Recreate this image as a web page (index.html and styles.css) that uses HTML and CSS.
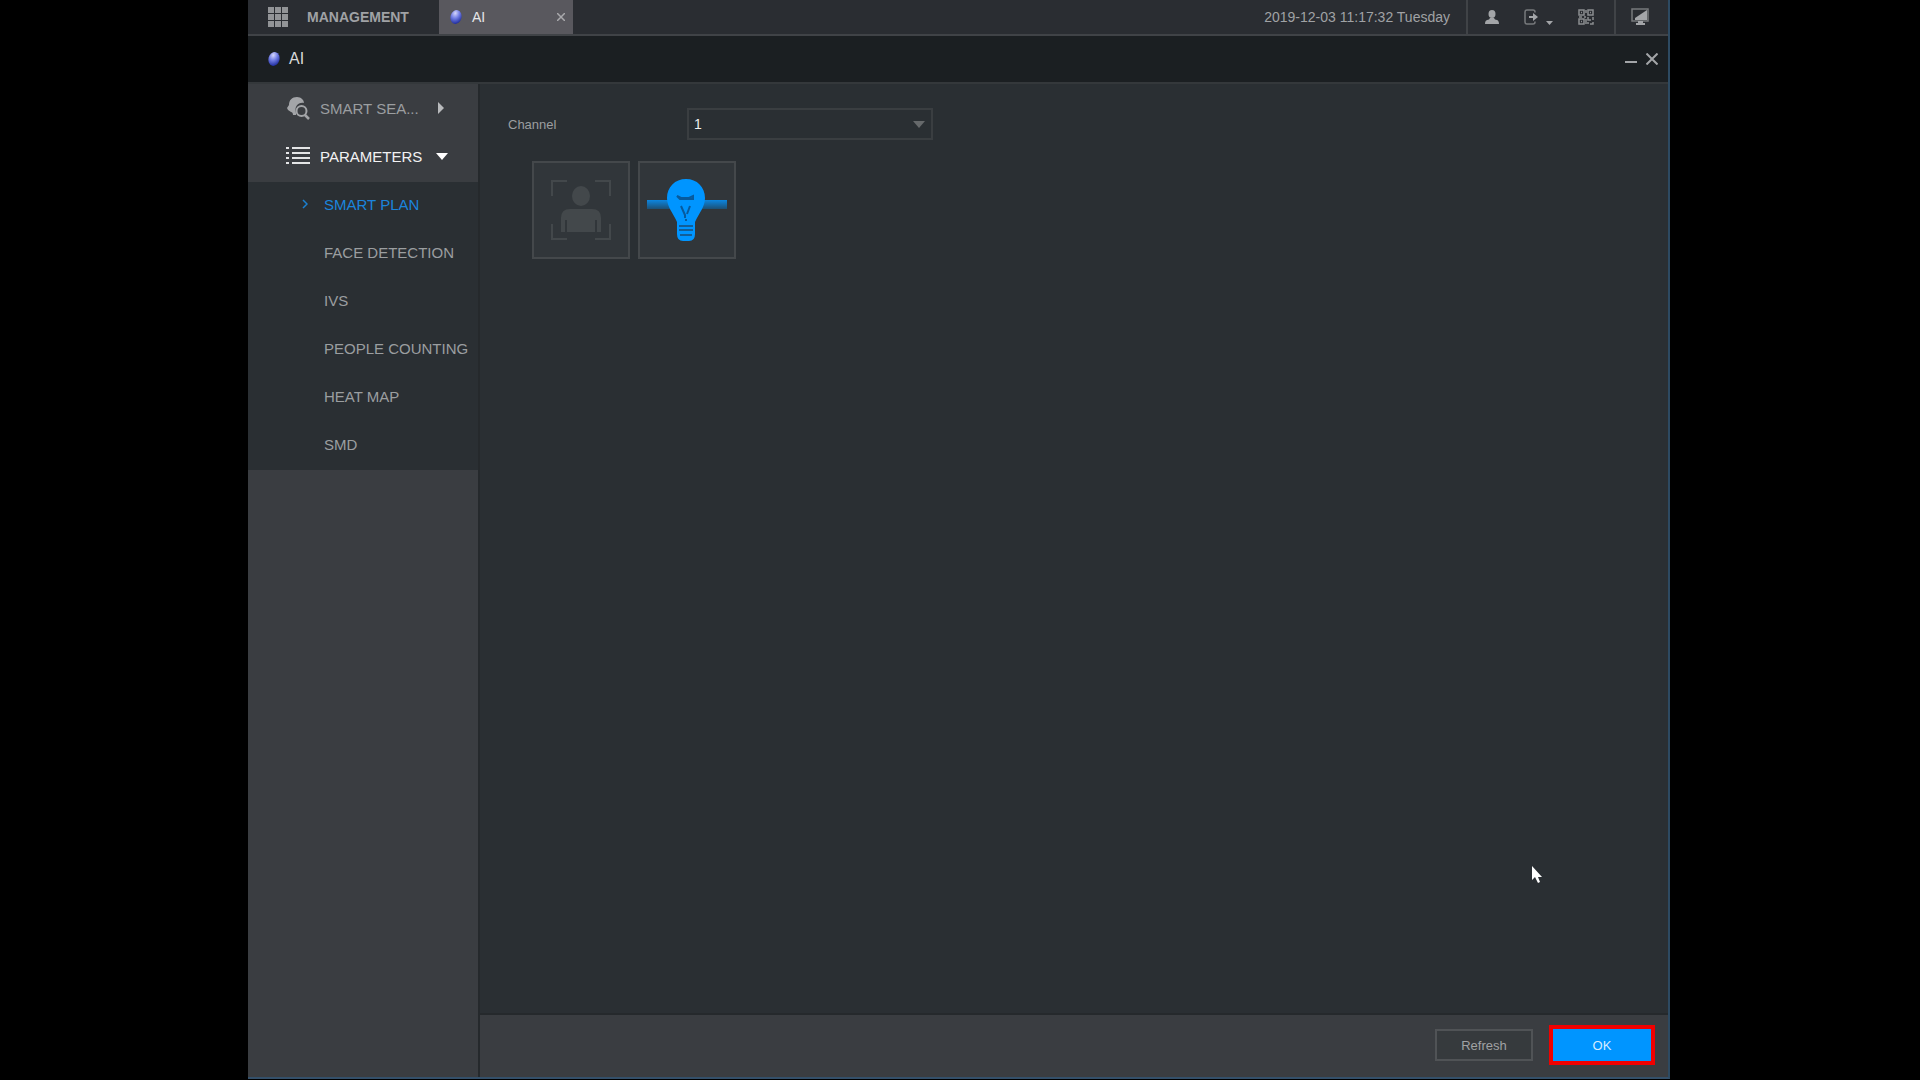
FILE: index.html
```html
<!DOCTYPE html>
<html lang="en">
<head>
    <meta charset="UTF-8">
    <meta name="viewport" content="width=device-width, initial-scale=1.0">
    <title>AI</title>
    <link rel="stylesheet" href="styles.css">
</head>
<body>
    <div class="app">
        <header class="topbar">
            <a href="#" class="management">
                <svg width="20" height="20" viewBox="0 0 20 20" fill="#929497">
                    <path d="M0 0h6v6H0zM7 0h6v6H7zM14 0h6v6h-6zM0 7h6v6H0zM7 7h6v6H7zM14 7h6v6h-6zM0 14h6v6H0zM7 14h6v6H7zM14 14h6v6h-6z"/>
                </svg>
                <span>MANAGEMENT</span>
            </a>
            <div class="tab">
                <svg width="12" height="14" viewBox="0 0 12 14">
                    <defs>
                        <radialGradient id="orb" cx="35%" cy="25%" r="80%">
                            <stop offset="0" stop-color="#d5d6fa"/>
                            <stop offset="0.45" stop-color="#7580e6"/>
                            <stop offset="1" stop-color="#1c2a9c"/>
                        </radialGradient>
                    </defs>
                    <ellipse cx="6" cy="7" rx="5.5" ry="7" transform="rotate(15 6 7)" fill="url(#orb)"/>
                </svg>
                <span class="tab-name">AI</span>
                <button type="button" class="icon-btn" aria-label="Close tab">
                    <svg width="8" height="8" viewBox="0 0 8 8" stroke="#a9a9ac" stroke-width="1.5"><path d="M0 0l8 8M8 0L0 8"/></svg>
                </button>
            </div>
            <time class="clock">2019-12-03 11:17:32 Tuesday</time>
            <div class="tools">
                <button type="button" class="icon-btn" aria-label="User">
                    <svg width="14" height="14" viewBox="0 0 14 14" fill="#a3a5a8"><ellipse cx="7" cy="4" rx="3.5" ry="4"/><path d="M0 14c0-3 1-4 4-4.5l1-1.5h4l1 1.5c3 .5 4 1.500 4 4.500z"/></svg>
                </button>
                <button type="button" class="icon-btn" aria-label="Log out">
                    <svg width="29" height="16" viewBox="0 0 29 16"><path d="M11 3.500V3q0-2-2-2H3Q1 1 1 3v10q0 2 2 2h6q2 0 2-2v-.5" fill="none" stroke="#77797c" stroke-width="1.500"/><path d="M5 7h4V4l5 4-5 4V9H5zM22 12h7l-3.500 4z" fill="#a3a5a8"/></svg>
                </button>
                <button type="button" class="icon-btn" aria-label="QR code">
                    <svg width="16" height="16" viewBox="0 0 16 16" fill="none" stroke="#8b8d90" stroke-width="1.500"><path d="M1 1h5v5H1zM10 1h5v5h-5zM1 10h5v5H1zM3 3.500h1M12 3.500h1M3 12.500h1M10 8v3h3M15 8v3M10 15v-2M12 15h3v-2M1 8h3M6 8h2M8 1v3M8 10v5"/></svg>
                </button>
            </div>
            <div class="display">
                <button type="button" class="icon-btn" aria-label="Display">
                    <svg width="18" height="18" viewBox="0 0 18 18"><path d="M1 1h16v12H1z" fill="none" stroke="#77797c" stroke-width="1.500"/><path d="M4 12V10L16 2v10zM7 13h5v2h2v2H5v-2h2z" fill="#a3a5a8"/></svg>
                </button>
            </div>
        </header>

        <div class="titlebar">
            <svg width="12" height="14" viewBox="0 0 12 14"><ellipse cx="6" cy="7" rx="5.5" ry="7" transform="rotate(15 6 7)" fill="url(#orb)"/></svg>
            <h1>AI</h1>
            <button type="button" class="icon-btn" aria-label="Minimize">
                <svg width="12" height="12" viewBox="0 0 12 12" stroke="#a3a5a8" stroke-width="2"><path d="M0 9h12"/></svg>
            </button>
            <button type="button" class="icon-btn" aria-label="Close">
                <svg width="12" height="12" viewBox="0 0 12 12" stroke="#a3a5a8" stroke-width="2"><path d="M0.500 0.500l11 11M11.500 0.500l-11 11"/></svg>
            </button>
        </div>

        <div class="content">
            <nav class="sidebar">
                <a href="#" class="group">
                    <svg width="24" height="24" viewBox="0 0 24 24"><path d="M3 9c0-5 3-8 8-8 4 0 7 3 7 6-6-1-10 4-8 10v2H7c0-2-1-3-2-3l-3-2-1-2z" fill="#a3a5a8"/><circle cx="15.500" cy="15" r="5" fill="none" stroke="#a3a5a8" stroke-width="2"/><path d="M19 19l4 4" stroke="#a3a5a8" stroke-width="2.500"/></svg>
                    <span class="group-name">SMART SEA...</span>
                    <svg width="12" height="12" viewBox="0 0 12 12" fill="#b8babc"><path d="M2 0l6 6-6 6z"/></svg>
                </a>
                <a href="#" class="group open">
                    <svg width="24" height="18" viewBox="0 0 24 18" fill="#e4e5e6"><path d="M0 0h3v2H0zM6 0h18v2H6zM0 5h3v2H0zM6 5h18v2H6zM0 10h3v2H0zM6 10h18v2H6zM0 15h3v2H0zM6 15h18v2H6z"/></svg>
                    <span class="group-name">PARAMETERS</span>
                    <svg width="12" height="7" viewBox="0 0 12 7" fill="#fff"><path d="M0 0h12l-6 7z"/></svg>
                </a>
                <ul class="submenu">
                    <li>
                        <a href="#" class="active">
                            <svg width="6" height="10" viewBox="0 0 6 10" fill="none" stroke="#1b80d0" stroke-width="1.500"><path d="M1 1l4 4-4 4"/></svg>
                            SMART PLAN
                        </a>
                    </li>
                    <li><a href="#">FACE DETECTION</a></li>
                    <li><a href="#">IVS</a></li>
                    <li><a href="#">PEOPLE COUNTING</a></li>
                    <li><a href="#">HEAT MAP</a></li>
                    <li><a href="#">SMD</a></li>
                </ul>
            </nav>

            <main class="main">
                <div class="panel">
                    <div class="field">
                        <label for="channel">Channel</label>
                        <div class="select-box">
                            <select id="channel">
                                <option>1</option>
                            </select>
                            <svg class="arrow" width="12" height="7" viewBox="0 0 12 7" fill="#66696b"><path d="M0 0h12l-6 7z"/></svg>
                        </div>
                    </div>
                    <div class="plans">
                        <button type="button" class="plan" aria-label="Face detection">
                            <svg width="60" height="60" viewBox="0 0 60 60">
                                <path d="M1 16V1h15M44 1h15v15M59 44v15H44M16 59H1V44" fill="none" stroke="#43484b" stroke-width="2"/>
                                <ellipse cx="30" cy="16" rx="9" ry="10" fill="#43484b"/>
                                <path d="M10 52V38q0-9 9-9h22q9 0 9 9v14h-4V40h-2v12H16V40h-2v12z" fill="#43484b"/>
                            </svg>
                        </button>
                        <button type="button" class="plan" aria-label="IVS">
                            <svg width="82" height="64" viewBox="0 0 82 64">
                                <defs>
                                    <linearGradient id="beam" x2="0" y2="1">
                                        <stop offset="0" stop-color="#0c86e0"/>
                                        <stop offset="1" stop-color="#1c5075"/>
                                    </linearGradient>
                                </defs>
                                <path d="M1 22h80v9H1z" fill="url(#beam)"/>
                                <path d="M40 1c11 0 19 8 19 19 0 9-6 15-10 24v12q0 7-6 7h-6q-6 0-6-7V44c-4-9-10-15-10-24C21 9 29 1 40 1z" fill="#0095ff"/>
                                <path d="M31 18l4 2h8l4-2v3H34zM35 28l4 9v3M44 28l-3 8M39 42h2" fill="none" stroke="#075a9d" stroke-width="2"/>
                                <path d="M33 48h14M33 52h14M34 57h12" stroke="#125e98" stroke-width="2"/>
                            </svg>
                        </button>
                    </div>
                    <svg class="cursor" width="12" height="18" viewBox="0 0 12 18"><path d="M1 0v14l3-3 3 6 2-1-2-5h4z" fill="#fff"/></svg>
                </div>
                <footer class="actions">
                    <button type="button" class="btn">Refresh</button>
                    <div class="highlight">
                        <button type="button" class="btn primary">OK</button>
                    </div>
                </footer>
            </main>
        </div>
    </div>
</body>
</html>
```
FILE: styles.css
```css
/* General page styling */
* {
    box-sizing: border-box;
}

body {
    margin: 0;
    padding: 0 250px 1px 248px;
    height: 100vh;
    background-color: #000;
    color: #9b9ea0;
    font-family: "Liberation Sans", Arial, sans-serif;
    font-size: 13px;
}

a {
    color: inherit;
    text-decoration: none;
}

button,
select {
    font-family: inherit;
    font-size: 13px;
}

svg {
    display: block;
    flex-shrink: 0;
}

.app {
    display: flex;
    flex-direction: column;
    height: 100%;
    background-color: #2a2f33;
    border-right: 2px solid #2d4a62;
    border-bottom: 2px solid #34506a;
}

.icon-btn {
    display: flex;
    padding: 0;
    border: none;
    background: none;
    cursor: pointer;
}

/* Top bar */
.topbar {
    display: flex;
    flex-shrink: 0;
    height: 36px;
    background-color: #2a2d32;
    border-bottom: 2px solid #404347;
}

.management {
    display: flex;
    align-items: center;
    gap: 19px;
    width: 191px;
    padding-left: 20px;
    font-size: 14px;
    font-weight: bold;
    color: #a0a2a5;
}

.tab {
    display: flex;
    align-items: center;
    gap: 10px;
    width: 134px;
    padding: 0 8px 0 11px;
    background-color: #59585e;
    color: #e6e6e8;
}

.tab-name {
    flex: 1;
    font-size: 14px;
}

.clock {
    display: flex;
    align-items: center;
    margin-left: auto;
    padding-right: 16px;
    font-size: 14px;
    color: #a0a2a5;
}

.tools,
.display {
    display: flex;
    align-items: center;
    border-left: 2px solid #404347;
}

.tools {
    gap: 25px;
    padding: 0 20px 0 17px;
}

.display {
    width: 54px;
    padding-left: 15px;
}

/* Title bar of the window */
.titlebar {
    display: flex;
    align-items: center;
    flex-shrink: 0;
    gap: 9px;
    height: 48px;
    padding: 0 10px 0 20px;
    background-color: #1b1f22;
    border-bottom: 2px solid #34383b;
}

.titlebar h1 {
    flex: 1;
    margin: 0;
    font-size: 16px;
    font-weight: normal;
    color: #d8d9da;
}

/* Sidebar */
.content {
    display: flex;
    flex: 1;
    min-height: 0;
}

.sidebar {
    flex: 0 0 232px;
    background-color: #3a3d41;
    border-right: 2px solid #25292c;
    font-size: 15px;
}

.group {
    display: flex;
    align-items: center;
    gap: 10px;
    height: 48px;
    padding-left: 38px;
}

.group-name {
    width: 106px;
    white-space: nowrap;
}

.group.open {
    height: 50px;
    padding-bottom: 2px;
    color: #f2f2f3;
}

.submenu {
    margin: 0;
    padding: 0;
    list-style: none;
    background-color: #2a2f33;
}

.submenu a {
    display: flex;
    align-items: center;
    height: 48px;
    padding: 0 0 4px 76px;
    white-space: nowrap;
}

.submenu .active {
    gap: 16px;
    padding-left: 54px;
    color: #1b84dc;
}

/* Main area */
.main {
    display: flex;
    flex: 1;
    flex-direction: column;
}

.panel {
    position: relative;
    flex: 1;
    padding: 24px 28px;
}

.field {
    display: flex;
    align-items: center;
}

.field label {
    width: 179px;
}

.select-box {
    position: relative;
    width: 246px;
}

.select-box select {
    display: block;
    width: 100%;
    height: 32px;
    padding: 0 5px;
    appearance: none;
    background-color: transparent;
    border: 2px solid #3a3e41;
    border-radius: 0;
    color: #f0f0f0;
    font-size: 14px;
}

.arrow {
    position: absolute;
    top: 13px;
    right: 8px;
    pointer-events: none;
}

.plans {
    display: flex;
    gap: 8px;
    margin: 21px 0 0 24px;
}

.plan {
    display: flex;
    align-items: center;
    justify-content: center;
    width: 98px;
    height: 98px;
    padding: 0;
    background-color: #31363a;
    border: 2px solid #44484b;
}

.cursor {
    position: absolute;
    right: 125px;
    bottom: 129px;
}

/* Buttons at the bottom */
.actions {
    display: flex;
    align-items: center;
    justify-content: flex-end;
    gap: 16px;
    height: 64px;
    padding: 0 13px 2px 0;
    background-color: #3a3d41;
    border-top: 2px solid #25292c;
}

.btn {
    display: block;
    width: 98px;
    height: 32px;
    padding: 0;
    background-color: #363a3d;
    border: 2px solid #505356;
    color: #a0a2a4;
    cursor: pointer;
}

.btn.primary {
    background-color: #0095ff;
    border: none;
    color: #d5ecff;
}

.highlight {
    border: 4px solid #f00000;
}
```
